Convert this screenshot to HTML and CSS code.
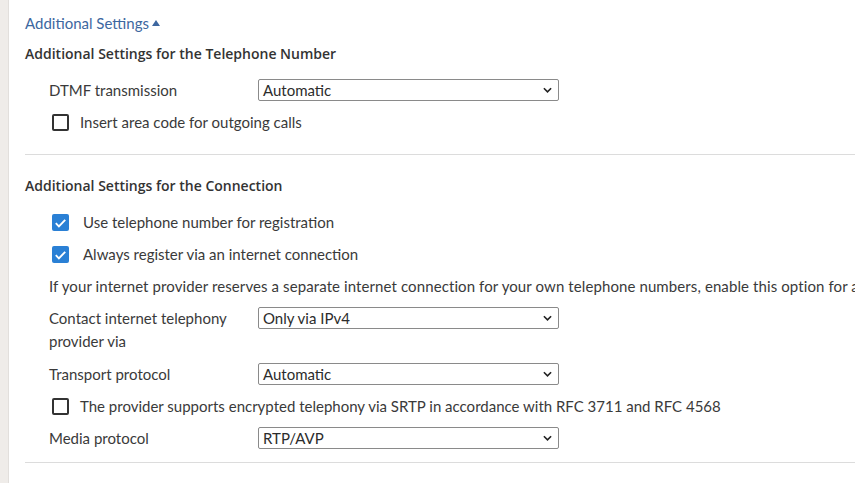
FILE: index.html
```html
<!DOCTYPE html>
<html>
<head>
<meta charset="utf-8">
<link rel="stylesheet" href="styles.css">
</head>
<body>
<div class="page">
  <div class="strip"></div>
  <div class="content">
    <a class="toggle" href="#">Additional Settings<span class="tri"></span></a>
    <h3 class="heading h1">Additional Settings for the Telephone Number</h3>
    <div class="row">
      <label class="lbl">DTMF transmission</label>
      <div class="select"><span>Automatic</span><svg class="chev" viewBox="0 0 10 6"><path d="M1 1l4 4 4-4" fill="none" stroke="#222" stroke-width="1.8"/></svg></div>
    </div>
    <div class="check"><span class="box"></span><span class="ctext">Insert area code for outgoing calls</span></div>
    <hr class="sep">
    <h3 class="heading h2">Additional Settings for the Connection</h3>
    <div class="check checked"><span class="box"><svg viewBox="0 0 18 18"><path d="M4 9.2l3.3 3.3L14 5.6" fill="none" stroke="#fff" stroke-width="2"/></svg></span><span class="ctext">Use telephone number for registration</span></div>
    <div class="check checked"><span class="box"><svg viewBox="0 0 18 18"><path d="M4 9.2l3.3 3.3L14 5.6" fill="none" stroke="#fff" stroke-width="2"/></svg></span><span class="ctext">Always register via an internet connection</span></div>
    <p class="para">If your internet provider reserves a separate internet connection for your own telephone numbers, enable this option for all telephone numbers.</p>
    <div class="row tall">
      <label class="lbl">Contact internet telephony provider via</label>
      <div class="select"><span>Only via IPv4</span><svg class="chev" viewBox="0 0 10 6"><path d="M1 1l4 4 4-4" fill="none" stroke="#222" stroke-width="1.8"/></svg></div>
    </div>
    <div class="row">
      <label class="lbl">Transport protocol</label>
      <div class="select"><span>Automatic</span><svg class="chev" viewBox="0 0 10 6"><path d="M1 1l4 4 4-4" fill="none" stroke="#222" stroke-width="1.8"/></svg></div>
    </div>
    <div class="check"><span class="box"></span><span class="ctext">The provider supports encrypted telephony via SRTP in accordance with RFC 3711 and RFC 4568</span></div>
    <div class="row">
      <label class="lbl">Media protocol</label>
      <div class="select"><span>RTP/AVP</span><svg class="chev" viewBox="0 0 10 6"><path d="M1 1l4 4 4-4" fill="none" stroke="#222" stroke-width="1.8"/></svg></div>
    </div>
    <hr class="sep last">
  </div>
</div>
</body>
</html>
```
FILE: styles.css
```css
html, body {
  margin: 0;
  padding: 0;
  background: #fff;
  height: 100%;
  overflow: hidden;
}
body {
  font-family: Lato, "Liberation Sans", sans-serif;
  font-size: 15px;
  color: #3a3a3a;
}
.page {
  display: flex;
  min-height: 483px;
}
.strip {
  width: 8px;
  flex: none;
  background: #efece9;
  border-right: 1px solid #e2dfdc;
}
.content {
  flex: 1;
  min-width: 0;
  overflow: hidden;
  padding-left: 16px;
  padding-top: 12px;
  white-space: nowrap;
}
.toggle {
  display: flex;
  align-items: center;
  height: 22px;
  color: #3d67a0;
  text-decoration: none;
}
.tri {
  width: 0;
  height: 0;
  margin-left: 3px;
  border-left: 4px solid transparent;
  border-right: 4px solid transparent;
  border-bottom: 6px solid #3d67a0;
}
.heading {
  margin: 9px 0 0;
  font-family: "Open Sans", Lato, sans-serif;
  font-size: 14px;
  font-weight: 600;
  line-height: 22px;
  color: #333;
}
.row {
  display: flex;
  align-items: center;
  padding: 5px 0 5px 24px;
  min-height: 22px;
}
.row.tall {
  align-items: flex-start;
}
.lbl {
  width: 209px;
  flex: none;
  line-height: 22px;
  white-space: normal;
}
.tall .lbl { line-height: 23px; }
.h1 + .row { margin-top: 9px; }
.select {
  width: 301px;
  height: 22px;
  box-sizing: border-box;
  border: 1px solid #8a8a8a;
  border-radius: 2px;
  display: flex;
  align-items: center;
  justify-content: space-between;
  padding: 0 6px 0 4px;
  color: #2c2c2c;
}
.chev {
  width: 9px;
  height: 6px;
}
.check {
  display: flex;
  align-items: center;
  height: 32px;
  padding-left: 27px;
}
.box {
  width: 17px;
  height: 17px;
  box-sizing: border-box;
  border: 2px solid #333;
  border-radius: 2px;
  flex: none;
}
.checked .box {
  border: none;
  background: #2a80d5;
  display: flex;
}
.checked .box svg { width: 18px; height: 18px; }
.ctext { margin-left: 11px; }
.checked .ctext { margin-left: 14px; }
.sep {
  border: none;
  border-top: 1px solid #dcdcdc;
  margin: 16px 0 0;
  height: 0;
}
.h2 { margin-top: 20px; }
.h2 + .check { margin-top: 9px; }
.para {
  margin: 0;
  padding-left: 24px;
  line-height: 32px;
  letter-spacing: 0.1px;
}
.sep.last { margin-top: 8px; }
```
